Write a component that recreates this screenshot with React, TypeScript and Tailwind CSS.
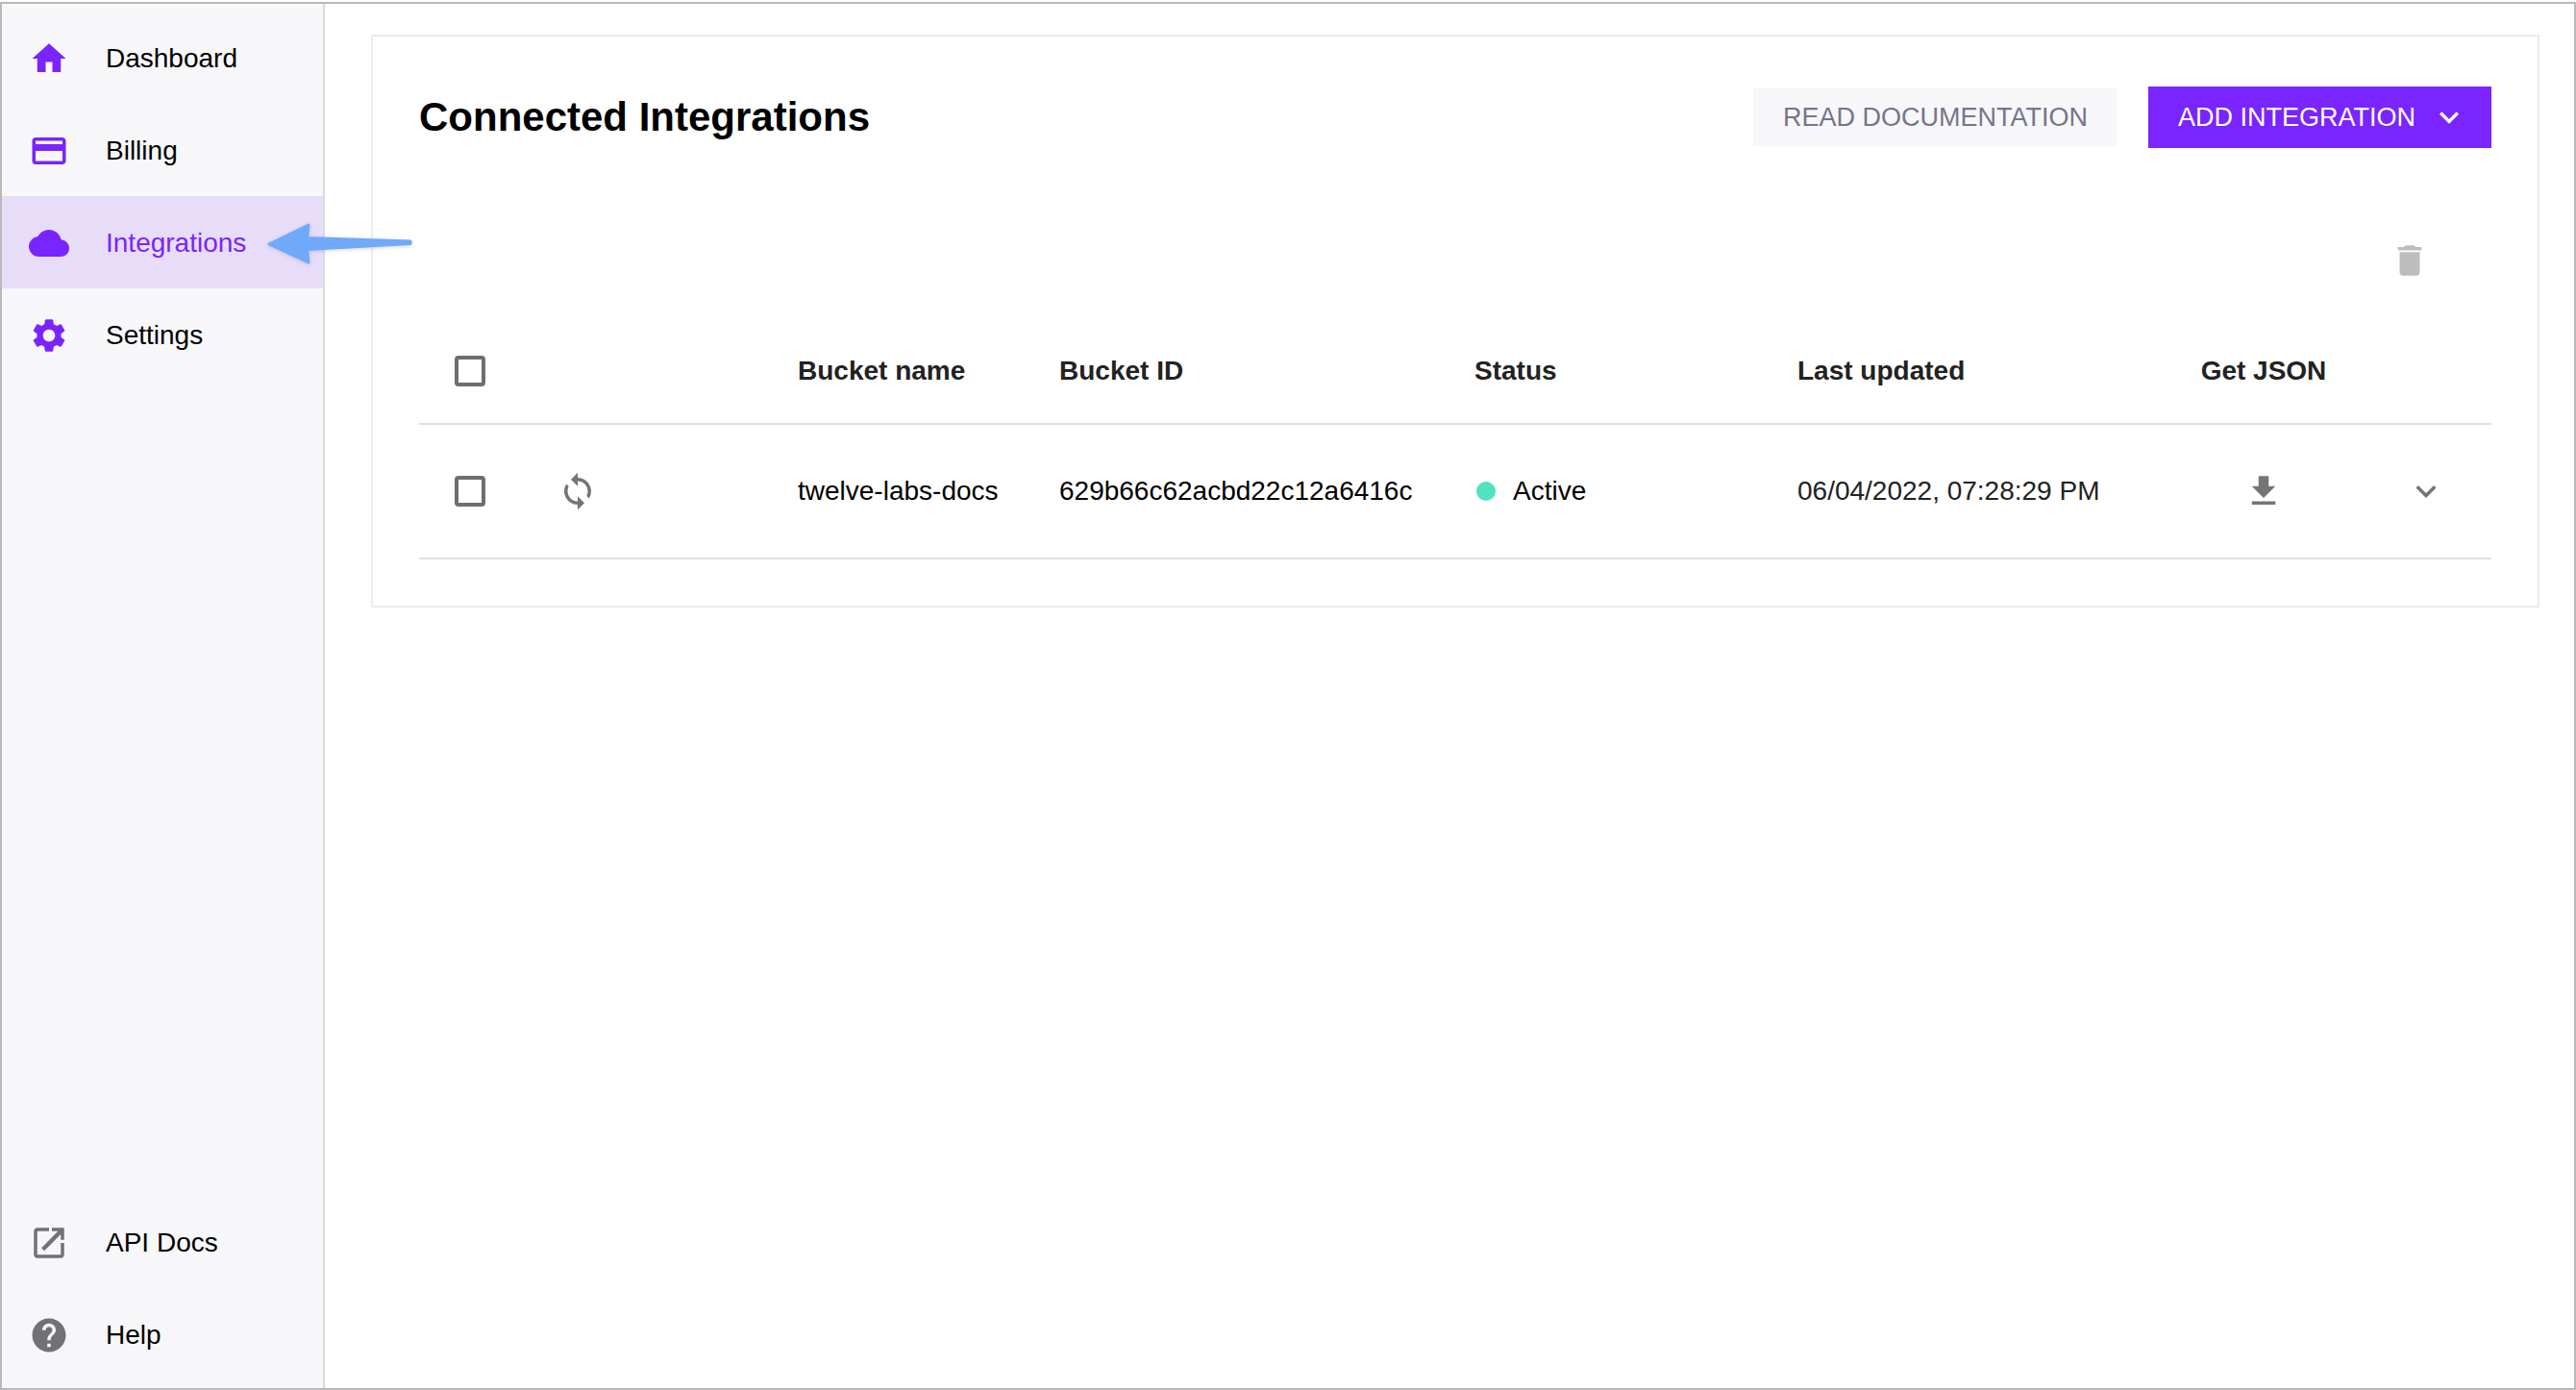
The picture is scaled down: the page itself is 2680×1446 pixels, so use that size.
import type { ReactNode } from "react";
import {
  MdCloud,
  MdDelete,
  MdExpandMore,
  MdGetApp,
  MdHelp,
  MdHome,
  MdLoop,
  MdOutlineCreditCard,
  MdSettings,
} from "react-icons/md";

function OpenInNewIcon() {
  return (
    <svg viewBox="0 0 24 24" className="size-[42px]" fill="currentColor" aria-hidden="true">
      <path d="M12 3v2H5v14h14v-7h2v7c0 1.1-.9 2-2 2H5c-1.11 0-2-.9-2-2V5c0-1.1.89-2 2-2zM13.700 3H21v7.200h-2V6.900L9.200 16.700 7.500 15 17.300 5H13.700z" />
    </svg>
  );
}

function PointerArrow() {
  return (
    <svg
      viewBox="0 0 160 56"
      className="pointer-events-none absolute top-5 left-[272px] z-10 h-14 w-40 drop-shadow-sm"
      aria-hidden="true"
    >
      <path
        d="M6 30 L47 10 L45.500 23.500 L153 27 V29.500 L45.500 35.500 L47 49 Z"
        fill="#71a9fb"
        stroke="#71a9fb"
        strokeWidth="3"
        strokeLinejoin="round"
      />
    </svg>
  );
}

type NavItemProps = {
  label: string;
  icon: ReactNode;
  tone?: "brand" | "muted";
  active?: boolean;
  children?: ReactNode;
};

function NavItem({ label, icon, tone = "brand", active = false, children }: NavItemProps) {
  return (
    <li className="relative">
      <a
        href="#"
        aria-current={active ? "page" : undefined}
        className={
          active
            ? "flex h-24 items-center gap-[38px] bg-[#e7ddf9] pt-px pl-7 text-[#7a24ff]"
            : "flex h-24 items-center gap-[38px] pt-px pl-7 text-black"
        }
      >
        <span className={tone === "brand" ? "text-[#7a24ff]" : "text-[#727274]"}>{icon}</span>
        {label}
      </a>
      {children}
    </li>
  );
}

function Checkbox({ label }: { label: string }) {
  return (
    <input
      type="checkbox"
      aria-label={label}
      className="mx-auto block size-8 appearance-none rounded-[4px] border-4 border-[#6e6e6e] bg-white"
    />
  );
}

export default function App() {
  return (
    <div className="min-h-screen bg-white pt-0.5 font-['Liberation_Sans',Arial,sans-serif] text-[28px] leading-8 text-black">
      <div className="flex min-h-[calc(100vh-2px)] border-2 border-[#b9b9bb]">
        <nav
          aria-label="Main"
          className="flex w-[336px] shrink-0 flex-col justify-between border-r-2 border-[#d9d9de] bg-[#f7f7fa] py-2"
        >
          <ul>
            <NavItem label="Dashboard" icon={<MdHome className="size-[42px]" />} />
            <NavItem label="Billing" icon={<MdOutlineCreditCard className="size-[42px]" />} />
            <NavItem label="Integrations" icon={<MdCloud className="size-[42px]" />} active>
              <PointerArrow />
            </NavItem>
            <NavItem label="Settings" icon={<MdSettings className="size-[42px]" />} />
          </ul>
          <ul>
            <NavItem label="API Docs" tone="muted" icon={<OpenInNewIcon />} />
            <NavItem label="Help" tone="muted" icon={<MdHelp className="size-[42px]" />} />
          </ul>
        </nav>

        <main className="min-w-0 flex-1 pt-8 pr-9 pl-12">
          <section className="border-2 border-[#ebebf2] p-12">
            <header className="flex h-[72px] items-center justify-between">
              <h1 className="text-[42px] leading-[48px] font-bold">Connected Integrations</h1>
              <div className="flex items-center gap-8 text-[27px]">
                <button type="button" className="h-[60px] bg-[#f7f7fa] px-[31px] text-[#75758a]">
                  READ DOCUMENTATION
                </button>
                <button
                  type="button"
                  className="flex h-16 items-center gap-[15px] bg-[#7a24ff] pr-6 pl-[31px] text-white"
                >
                  ADD INTEGRATION
                  <MdExpandMore className="size-10" />
                </button>
              </div>
            </header>

            <div className="mt-[52px] flex h-[122px] items-center justify-end pr-16">
              <button type="button" aria-label="Delete selected" className="text-[#bdbdbd]">
                <MdDelete className="size-[42px]" />
              </button>
            </div>

            <table className="w-full table-fixed border-collapse text-left">
              <colgroup>
                <col className="w-[106px]" />
                <col className="w-[288px]" />
                <col className="w-[272px]" />
                <col className="w-[432px]" />
                <col className="w-[336px]" />
                <col className="w-[384px]" />
                <col className="w-[202px]" />
                <col className="w-[136px]" />
              </colgroup>
              <thead>
                <tr className="h-[109px] border-b-2 border-[#e0e0e0] text-[#222222]">
                  <th scope="col">
                    <Checkbox label="Select all buckets" />
                  </th>
                  <td />
                  <th scope="col">Bucket name</th>
                  <th scope="col">Bucket ID</th>
                  <th scope="col">Status</th>
                  <th scope="col">Last updated</th>
                  <th scope="col" className="text-center">
                    Get JSON
                  </th>
                  <td />
                </tr>
              </thead>
              <tbody>
                <tr className="h-[140px] border-b-2 border-[#e0e0e0]">
                  <td>
                    <Checkbox label="Select twelve-labs-docs" />
                  </td>
                  <td className="pl-[38px]">
                    <button type="button" aria-label="Sync bucket" className="block text-[#757575]">
                      <MdLoop className="size-[42px]" />
                    </button>
                  </td>
                  <td>twelve-labs-docs</td>
                  <td>629b66c62acbd22c12a6416c</td>
                  <td>
                    <span className="flex items-center gap-[18px] pl-0.5">
                      <span className="size-5 rounded-full bg-[#50e3c2]" />
                      Active
                    </span>
                  </td>
                  <td className="text-[#222222]">06/04/2022, 07:28:29 PM</td>
                  <td>
                    <button
                      type="button"
                      aria-label="Download JSON"
                      className="mx-auto block text-[#757575]"
                    >
                      <MdGetApp className="size-[42px]" />
                    </button>
                  </td>
                  <td>
                    <button
                      type="button"
                      aria-label="Show details"
                      className="mx-auto block text-[#757575]"
                    >
                      <MdExpandMore className="size-[42px]" />
                    </button>
                  </td>
                </tr>
              </tbody>
            </table>
          </section>
        </main>
      </div>
    </div>
  );
}
